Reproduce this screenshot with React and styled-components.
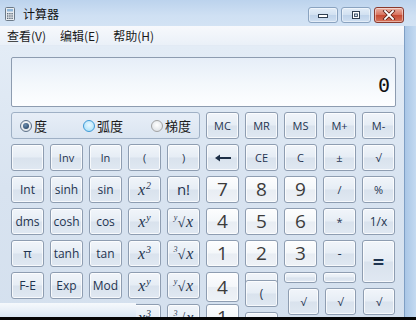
import React from "react";
import styled, { createGlobalStyle } from "styled-components";

const GlobalStyle = createGlobalStyle`
  html, body {
    margin: 0;
    padding: 0;
    background: #0a0a0a;
  }
  body {
    font-family: "Noto Sans CJK SC", "Noto Sans", sans-serif;
  }
`;

const Screen = styled.div`
  width: 416px;
  height: 320px;
  display: flex;
  flex-direction: column;
  overflow: hidden;
  background: #0a0a0a;
`;

const Frame = styled.div`
  position: relative;
  height: 317px;
  display: flex;
  flex-direction: column;
  overflow: hidden;
  background: linear-gradient(#b9d1ec, #c8dbf0 40%, #bdd3ec);
`;

const TitleBar = styled.div`
  height: 26px;
  flex: none;
  display: flex;
  align-items: flex-start;
  padding: 0 12px 0 5px;
  background: linear-gradient(#bcd3ed, #cfe0f3 60%, #d3e3f4);
`;

const TitleText = styled.span`
  margin: 7px 0 0 8px;
  font-size: 12px;
  line-height: 14px;
  color: #111;
`;

const Captions = styled.div`
  margin-left: auto;
  margin-top: 7px;
  display: flex;
  gap: 3px;
`;

const CaptionBtn = styled.div`
  width: 30px;
  height: 16px;
  box-sizing: border-box;
  border: 1px solid ${(p) => (p.$close ? "#8a3a2e" : "#8aa3c0")};
  border-radius: 3px;
  display: flex;
  align-items: center;
  justify-content: center;
  background: ${(p) =>
    p.$close
      ? "linear-gradient(#eab2a6, #d9745f 48%, #c64a33 52%, #d6735a)"
      : "linear-gradient(#e3edf8, #d2e1f1 48%, #bfd3ea 52%, #cfdff1)"};
  box-shadow: inset 0 0 0 1px rgba(255, 255, 255, 0.45);
`;

const Lower = styled.div`
  flex: 1;
  display: flex;
  min-height: 0;
`;

const Client = styled.div`
  width: 404px;
  flex: none;
  display: flex;
  flex-direction: column;
`;

const RightEdge = styled.div`
  flex: 1;
  border-left: 1px solid #7f9fc4;
  background: linear-gradient(90deg, #a9c6e6, #c4daf1);
`;

const MenuBar = styled.div`
  height: 20px;
  flex: none;
  display: flex;
  align-items: center;
  padding-left: 1px;
  background: linear-gradient(#f7f9fc, #eaf0f8);
  border-bottom: 1px solid #e2eaf4;
  box-sizing: border-box;
`;

const MenuItem = styled.span`
  padding: 0 8px 0 6px;
  font-size: 12px;
  color: #1a1a1a;
  line-height: 20px;
`;

const Body = styled.div`
  flex: 1;
  padding: 11px 8px 0 11px;
  background: linear-gradient(#e3ecf6, #d8e3f0 50%, #d4e0ee);
`;

const Display = styled.div`
  height: 50px;
  box-sizing: border-box;
  border: 1px solid #8d9cb0;
  border-radius: 2px;
  margin-bottom: 5px;
  background: linear-gradient(#e6eef8, #f4f8fc 55%, #fdfeff);
  display: flex;
  align-items: flex-end;
  justify-content: flex-end;
  padding: 0 5px 9px 0;
  font-family: "DejaVu Sans Mono", "Liberation Mono", monospace;
  font-size: 20px;
  color: #111;
`;

const Keypad = styled.div`
  position: relative;
  display: grid;
  grid-template-columns: repeat(10, 33px);
  grid-auto-rows: 27px;
  column-gap: 6px;
  row-gap: 5px;
`;

const RadioPanel = styled.div`
  grid-column: span 5;
  box-sizing: border-box;
  border: 1px solid #9fb0c5;
  border-radius: 3px;
  display: flex;
  align-items: center;
  padding-left: 8px;
  background: linear-gradient(#e7eef7, #dbe5f1);
`;

const RadioItem = styled.label`
  display: flex;
  align-items: center;
  gap: 2px;
  width: ${(p) => p.$w}px;
  font-size: 13px;
  color: #1b1b1b;
`;

const Dot = styled.span`
  width: 12px;
  height: 12px;
  box-sizing: border-box;
  border-radius: 50%;
  display: flex;
  align-items: center;
  justify-content: center;
  border: 1px solid
    ${(p) => (p.$state === "on" ? "#5d7189" : p.$state === "hover" ? "#3f9ad6" : "#a2a2a2")};
  background: ${(p) =>
    p.$state === "hover"
      ? "radial-gradient(circle at 50% 40%, #e9f8ff, #9fdcf8)"
      : "radial-gradient(circle at 50% 40%, #ffffff, #d6dbe0)"};

  &::after {
    content: "";
    display: ${(p) => (p.$state === "on" ? "block" : "none")};
    width: 6px;
    height: 6px;
    border-radius: 50%;
    background: radial-gradient(circle at 40% 35%, #6f8fb0, #1b3757);
  }
`;

const Key = styled.button`
  box-sizing: border-box;
  height: ${(p) => p.$h || 27}px;
  align-self: start;
  ${(p) => p.$rows && `grid-row: span ${p.$rows};`}
  padding: 0;
  border: 1px solid #8e9db1;
  border-radius: 3px;
  background: ${(p) =>
    p.$num
      ? "linear-gradient(#fdfdfe, #f4f7fa 48%, #e8edf3 52%, #eef2f7)"
      : "linear-gradient(#f1f5fa, #e6edf5 48%, #d9e2ed 52%, #e0e8f2)"};
  box-shadow: inset 0 0 0 1px rgba(255, 255, 255, 0.75);
  color: ${(p) => (p.$num ? "#3c3c3c" : "#1f3450")};
  font-family: "Open Sans", "Noto Sans", sans-serif;
  font-size: ${(p) => p.$fs || 11}px;
  font-weight: ${(p) => (p.$bold ? 700 : 400)};
  line-height: 1;
  display: flex;
  align-items: center;
  justify-content: center;
`;

const GhostKey = styled(Key)`
  position: absolute;
  left: ${(p) => p.$x}px;
  top: ${(p) => p.$y}px;
  width: ${(p) => p.$w || 33}px;
`;

const MathText = styled.span`
  display: inline-block;
  white-space: nowrap;
  font-family: "Liberation Serif", "DejaVu Serif", serif;
  font-style: italic;
  font-size: 16px;
  line-height: 1;
  color: #1f3450;
`;

const Sup = styled.span`
  font-size: 10px;
  vertical-align: 6px;
  margin-left: 1px;
`;

const RootSign = styled.span`
  font-style: normal;
  font-size: 14px;
  margin-right: 1px;
`;

const RootIndex = styled.span`
  font-size: 8px;
  vertical-align: 7px;
`;

const BottomStrip = styled.div`
  position: absolute;
  left: 0;
  top: 303px;
  width: 136px;
  height: 14px;
  background: linear-gradient(#f6f9fc, #e9f0f8 50%, #d9e5f2);
`;

const BlackBar = styled.div`
  height: 3px;
  background: #050505;
`;

function CalcIcon() {
  return (
    <svg width="10" height="14" viewBox="0 0 10 14" style={{ marginTop: 7 }}>
      <rect x="0.5" y="0.5" width="9" height="13" rx="1" fill="#e8ecf0" stroke="#6c7a88" />
      <rect x="2" y="2" width="6" height="2.5" fill="#8fb6d8" />
      {[0, 1, 2].map((r) =>
        [0, 1, 2].map((c) => (
          <rect key={`${r}${c}`} x={2 + c * 2.2} y={6 + r * 2.3} width="1.4" height="1.4" fill="#5f6d7b" />
        ))
      )}
    </svg>
  );
}

function MinGlyph() {
  return (
    <svg width="12" height="8" viewBox="0 0 12 8">
      <rect x="1.5" y="3.5" width="9" height="3" fill="#fff" stroke="#2f3f52" />
    </svg>
  );
}

function MaxGlyph() {
  return (
    <svg width="12" height="10" viewBox="0 0 12 10">
      <rect x="2.5" y="1.5" width="7" height="7" fill="none" stroke="#2f3f52" />
      <rect x="3.5" y="2.5" width="5" height="5" fill="none" stroke="#fff" />
      <rect x="4.5" y="4" width="3" height="2.5" fill="#cddcee" stroke="#2f3f52" strokeWidth="0.8" />
    </svg>
  );
}

function CloseGlyph() {
  return (
    <svg width="14" height="10" viewBox="0 0 14 10">
      <path d="M3 1 L11 9 M11 1 L3 9" stroke="#5a2016" strokeWidth="3.4" strokeLinecap="square" />
      <path d="M3 1 L11 9 M11 1 L3 9" stroke="#fff" strokeWidth="1.8" strokeLinecap="square" />
    </svg>
  );
}

function BackArrow() {
  return (
    <svg width="18" height="8" viewBox="0 0 18 8">
      <path d="M5 4 H17" stroke="#1d2f46" strokeWidth="2" />
      <path d="M1 4 L6 0.5 L6 7.5 Z" fill="#1d2f46" />
    </svg>
  );
}

const Pow = ({ e }) => (
  <MathText>
    x<Sup>{e}</Sup>
  </MathText>
);

const Root = ({ n }) => (
  <MathText>
    <RootIndex>{n}</RootIndex>
    <RootSign>√</RootSign>x
  </MathText>
);

const radios = [
  { label: "度", state: "on", w: 63 },
  { label: "弧度", state: "hover", w: 68 },
  { label: "梯度", state: "off", w: 40 },
];

export default function App() {
  return (
    <>
      <GlobalStyle />
      <Screen>
        <Frame>
          <TitleBar>
            <CalcIcon />
            <TitleText>计算器</TitleText>
            <Captions>
              <CaptionBtn>
                <MinGlyph />
              </CaptionBtn>
              <CaptionBtn>
                <MaxGlyph />
              </CaptionBtn>
              <CaptionBtn $close>
                <CloseGlyph />
              </CaptionBtn>
            </Captions>
          </TitleBar>
          <Lower>
            <Client>
              <MenuBar>
                <MenuItem>查看(V)</MenuItem>
                <MenuItem>编辑(E)</MenuItem>
                <MenuItem>帮助(H)</MenuItem>
              </MenuBar>
              <Body>
                <Display>0</Display>
                <Keypad>
                  <RadioPanel>
                    {radios.map((r) => (
                      <RadioItem key={r.label} $w={r.w}>
                        <Dot $state={r.state} />
                        {r.label}
                      </RadioItem>
                    ))}
                  </RadioPanel>
                  <Key>MC</Key>
                  <Key>MR</Key>
                  <Key>MS</Key>
                  <Key>M+</Key>
                  <Key>M-</Key>

                  <Key />
                  <Key>Inv</Key>
                  <Key>ln</Key>
                  <Key>(</Key>
                  <Key>)</Key>
                  <Key>
                    <BackArrow />
                  </Key>
                  <Key>CE</Key>
                  <Key>C</Key>
                  <Key>±</Key>
                  <Key>√</Key>

                  <Key $fs={12}>Int</Key>
                  <Key $fs={12}>sinh</Key>
                  <Key $fs={12}>sin</Key>
                  <Key>
                    <Pow e="2" />
                  </Key>
                  <Key $fs={15}>n!</Key>
                  <Key $num $fs={19}>7</Key>
                  <Key $num $fs={19}>8</Key>
                  <Key $num $fs={19}>9</Key>
                  <Key>/</Key>
                  <Key>%</Key>

                  <Key $fs={12}>dms</Key>
                  <Key $fs={12}>cosh</Key>
                  <Key $fs={12}>cos</Key>
                  <Key>
                    <Pow e="y" />
                  </Key>
                  <Key>
                    <Root n="y" />
                  </Key>
                  <Key $num $fs={19}>4</Key>
                  <Key $num $fs={19}>5</Key>
                  <Key $num $fs={19}>6</Key>
                  <Key>*</Key>
                  <Key $fs={12}>1/x</Key>

                  <Key $fs={13}>π</Key>
                  <Key $fs={12}>tanh</Key>
                  <Key $fs={12}>tan</Key>
                  <Key>
                    <Pow e="3" />
                  </Key>
                  <Key>
                    <Root n="3" />
                  </Key>
                  <Key $num $fs={19}>1</Key>
                  <Key $num $fs={19}>2</Key>
                  <Key $num $fs={19}>3</Key>
                  <Key $fs={13}>-</Key>
                  <Key $rows={2} $h={43} $fs={20} $bold>
                    =
                  </Key>

                  <Key $fs={12}>F-E</Key>
                  <Key $fs={12}>Exp</Key>
                  <Key $fs={12}>Mod</Key>
                  <Key>
                    <Pow e="y" />
                  </Key>
                  <Key>
                    <Root n="y" />
                  </Key>
                  <Key $num $fs={19} $h={30}>4</Key>
                  <Key />
                  <Key $h={11} />
                  <Key $h={11} />

                  <Key />
                  <Key />
                  <Key />
                  <Key>
                    <Pow e="3" />
                  </Key>
                  <Key>
                    <Root n="3" />
                  </Key>
                  <Key $num $fs={19}>1</Key>

                  <GhostKey $x={234} $y={200} />
                  <GhostKey $x={234} $y={168} $fs={12}>
                    (
                  </GhostKey>
                  <GhostKey $x={277} $y={176} $w={31}>
                    √
                  </GhostKey>
                  <GhostKey $x={314} $y={176} $w={31}>
                    √
                  </GhostKey>
                  <GhostKey $x={352} $y={176} $w={32}>
                    √
                  </GhostKey>
                </Keypad>
              </Body>
            </Client>
            <RightEdge />
          </Lower>
          <BottomStrip />
        </Frame>
        <BlackBar />
      </Screen>
    </>
  );
}
